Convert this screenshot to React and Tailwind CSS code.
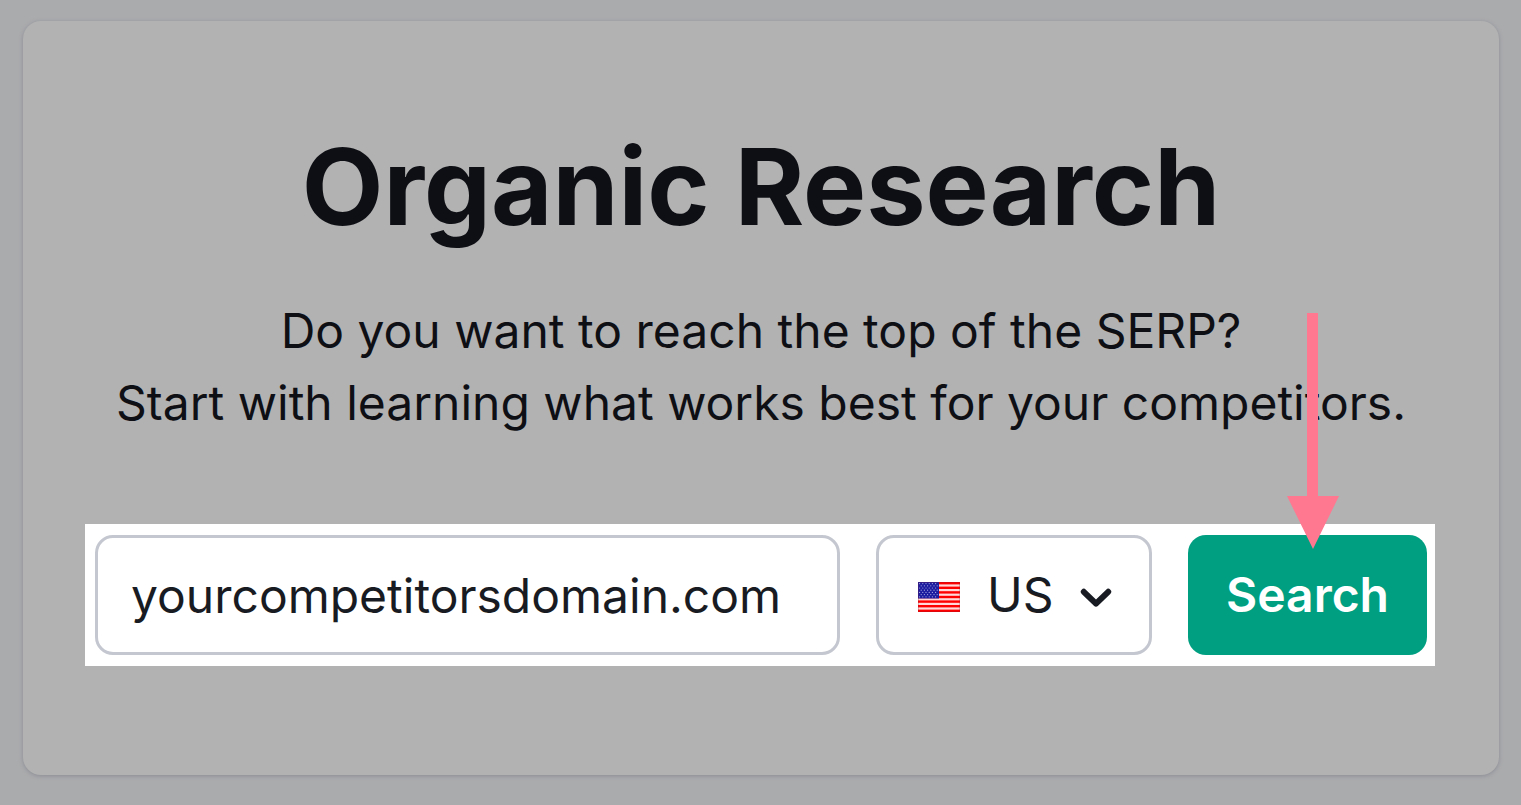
import React, { useState } from "react";

const stripes = [0, 1, 2, 3, 4, 5, 6];
const starRows = [0, 1, 2, 3, 4, 5, 6];
const starCols = [0, 1, 2, 3, 4, 5];

function FlagUS({ className }) {
  return (
    <svg viewBox="0 0 42 30" className={className} aria-hidden="true">
      <rect width="42" height="30" fill="#ffd9d9" />
      {stripes.map((i) => (
        <rect key={i} y={i * 4.6} width="42" height="2.4" fill="#ff0000" />
      ))}
      <rect width="21" height="16.5" fill="#1c1ca0" />
      {starRows.map((r) =>
        starCols.map((c) => (
          <circle
            key={`${r}-${c}`}
            cx={1.6 + c * 3.2 + (r % 2) * 1.6}
            cy={1.6 + r * 2.2}
            r="0.6"
            fill="#a9a9e0"
          />
        ))
      )}
      <rect x="0.5" y="0.5" width="41" height="29" fill="none" stroke="#7a2030" strokeOpacity="0.25" />
    </svg>
  );
}

function Chevron({ className }) {
  return (
    <svg viewBox="0 0 32 20" className={className} aria-hidden="true">
      <path
        d="M3.8 3.8 16 15.6 28.2 3.8"
        fill="none"
        stroke="#191b23"
        strokeWidth="6"
        strokeLinecap="round"
        strokeLinejoin="round"
      />
    </svg>
  );
}

function Arrow({ className }) {
  return (
    <svg viewBox="0 0 52 236" className={className} aria-hidden="true">
      <path d="M20 0H31V183H52L26 236 0 183H20Z" fill="#ff7890" />
    </svg>
  );
}

export default function App() {
  const [domain, setDomain] = useState("yourcompetitorsdomain.com");
  const [country, setCountry] = useState("US");

  return (
    <main className="min-h-screen bg-[#aaabad] pt-[21px] pr-[22px] pb-[30px] pl-[23px] font-['Inter',sans-serif] text-[#0e0f15]">
      <section className="rounded-[18px] bg-[#b2b2b2] px-[62px] pt-[106px] pb-[109px] shadow-[0_1px_4px_#8b8c94]">
        <h1 className="text-center text-[106px] leading-[120px] font-bold">
          Organic Research
        </h1>
        <p className="mt-12 text-center text-5xl leading-[72px]">
          Do you want to reach the top of the SERP?
          <br />
          <span className="whitespace-nowrap">
            Start with learning what works best for your competitors.
          </span>
        </p>

        <form
          className="mt-[85px] mr-0.5 flex gap-9 bg-white py-[11px] pr-2 pl-[10px] text-5xl text-[#191b23]"
          onSubmit={(e) => e.preventDefault()}
        >
          <input
            type="text"
            aria-label="Domain"
            value={domain}
            onChange={(e) => setDomain(e.target.value)}
            className="h-[120px] min-w-0 flex-1 rounded-[18px] border-3 border-[#c4c7cf] bg-white px-[33px] outline-none"
          />

          <div className="relative w-[276px]">
            <select
              aria-label="Country"
              value={country}
              onChange={(e) => setCountry(e.target.value)}
              className="h-[120px] w-full appearance-none rounded-[18px] border-3 border-[#c4c7cf] bg-white pl-[108px] outline-none"
            >
              <option value="US">US</option>
            </select>
            <FlagUS className="pointer-events-none absolute top-[47px] left-[42px] h-[30px] w-[42px]" />
            <Chevron className="pointer-events-none absolute top-[53px] right-10 h-5 w-8" />
          </div>

          <div className="relative w-[239px]">
            <button
              type="submit"
              className="h-[120px] w-full rounded-[18px] bg-[#009f81] font-semibold text-white"
            >
              Search
            </button>
            <Arrow className="pointer-events-none absolute bottom-[106px] left-[99px] h-[236px] w-[52px]" />
          </div>
        </form>
      </section>
    </main>
  );
}
